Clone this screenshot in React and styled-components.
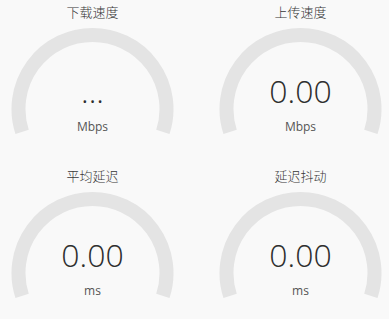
import React from 'react';
import styled, { createGlobalStyle } from 'styled-components';

const GlobalStyle = createGlobalStyle`
  html, body {
    margin: 0;
    padding: 0;
    background: #f9f9f9;
    overflow: hidden;
  }
  body {
    font-family: "Open Sans", "Noto Sans CJK SC", sans-serif;
    color: #333333;
  }
`;

const Board = styled.div`
  display: grid;
  grid-template-columns: 163px 163px;
  column-gap: 45px;
  row-gap: 28px;
  padding: 4px 0 0 11px;
`;

const Cell = styled.div`
  display: flex;
  flex-direction: column;
  align-items: center;
  gap: 8px;
`;

const Title = styled.div`
  font-family: "Noto Sans CJK SC", sans-serif;
  font-size: 13px;
  font-weight: 300;
  line-height: 16px;
  color: #363636;
`;

const Gauge = styled.div`
  position: relative;
  width: 163px;
  height: 112px;

  svg {
    display: block;
  }
`;

const Readout = styled.div`
  position: absolute;
  top: 45px;
  left: 0;
  right: 0;
  display: flex;
  flex-direction: column;
  align-items: center;
  gap: 10px;
`;

const Value = styled.div`
  font-size: 32px;
  font-weight: 300;
  line-height: 36px;
  height: 36px;
  color: #2e2e2e;
`;

const Unit = styled.div`
  font-size: 12px;
  line-height: 16px;
  color: #555555;
`;

const CX = 81.5;
const CY = 81;
const R = 74;
const CUT = 18;

function arcPath() {
  const a = (CUT * Math.PI) / 180;
  const x1 = CX - R * Math.cos(a);
  const x2 = CX + R * Math.cos(a);
  const y = CY + R * Math.sin(a);
  return `M ${x1} ${y} A ${R} ${R} 0 1 1 ${x2} ${y}`;
}

function Meter({ title, value, unit }) {
  return (
    <Cell>
      <Title>{title}</Title>
      <Gauge>
        <svg width="163" height="112" viewBox="0 0 163 112">
          <path d={arcPath()} fill="none" stroke="#e4e4e4" strokeWidth="14" />
        </svg>
        <Readout>
          <Value>{value}</Value>
          <Unit>{unit}</Unit>
        </Readout>
      </Gauge>
    </Cell>
  );
}

const meters = [
  { title: '下载速度', value: '...', unit: 'Mbps' },
  { title: '上传速度', value: '0.00', unit: 'Mbps' },
  { title: '平均延迟', value: '0.00', unit: 'ms' },
  { title: '延迟抖动', value: '0.00', unit: 'ms' },
];

export default function App() {
  return (
    <>
      <GlobalStyle />
      <Board>
        {meters.map((m) => (
          <Meter key={m.title} {...m} />
        ))}
      </Board>
    </>
  );
}
